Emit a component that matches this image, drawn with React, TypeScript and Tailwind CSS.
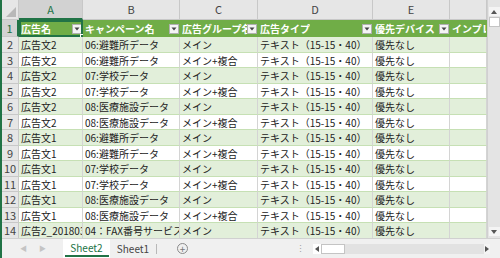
import React from "react";

const cols = ["A", "B", "C", "D", "E", ""];
const headers = ["広告名", "キャンペーン名", "広告グループ名", "広告タイプ", "優先デバイス", "インプレッション"];

const rows = [
  ["広告文2", "06:避難所データ", "メイン"],
  ["広告文2", "06:避難所データ", "メイン+複合"],
  ["広告文2", "07:学校データ", "メイン"],
  ["広告文2", "07:学校データ", "メイン+複合"],
  ["広告文2", "08:医療施設データ", "メイン"],
  ["広告文2", "08:医療施設データ", "メイン+複合"],
  ["広告文1", "06:避難所データ", "メイン"],
  ["広告文1", "06:避難所データ", "メイン+複合"],
  ["広告文1", "07:学校データ", "メイン"],
  ["広告文1", "07:学校データ", "メイン+複合"],
  ["広告文1", "08:医療施設データ", "メイン"],
  ["広告文1", "08:医療施設データ", "メイン+複合"],
  ["広告2_20180322", "04：FAX番号サービス", "メイン"],
];

const FilterButton = () => (
  <span className="ml-auto flex h-[10px] w-[10px] shrink-0 items-center justify-center border border-[#b0b0b0] bg-[#f4f4f4]">
    <svg width="6" height="4" viewBox="0 0 6 4">
      <path d="M0.5 0.5 L5.5 0.5 L3 3.5 Z" fill="#444" />
    </svg>
  </span>
);

const VScroll = () => (
  <div className="flex w-[13px] flex-col items-center border-l border-[#d0d0d0] bg-[#e4e4e4] pt-[7px]">
    <div className="flex h-[9px] w-[11px] items-center justify-center bg-[#f4f4f4]">
      <svg width="6" height="4" viewBox="0 0 6 4">
        <path d="M0 4 L6 4 L3 0 Z" fill="#555" />
      </svg>
    </div>
    <div className="mt-[1px] h-[10px] w-[11px] border border-[#c4c4c4] bg-white" />
    <div className="flex-1" />
    <div className="mb-[2px] flex h-[9px] w-[11px] items-center justify-center bg-[#f4f4f4]">
      <svg width="6" height="4" viewBox="0 0 6 4">
        <path d="M0 0 L6 0 L3 4 Z" fill="#555" />
      </svg>
    </div>
  </div>
);

const Tabs = () => (
  <div className="flex h-[20px] items-center border-t border-[#d0d0d0] bg-[#f0f0f0] text-[10px]">
    <div className="flex w-[61px] items-center gap-[12px] pl-[18px] text-[7px] text-[#c4c4c4]">
      <span>◀</span>
      <span>▶</span>
    </div>
    <div className="flex h-full w-[47px] flex-col items-center justify-center bg-white">
      <span className="mt-[1px] leading-[12px] text-[#217346]">Sheet2</span>
      <span className="mt-[1px] h-[2px] w-[44px] bg-[#217346]" />
    </div>
    <div className="flex h-full w-[46px] items-center justify-center text-[#444]">Sheet1</div>
    <div className="h-[10px] w-px bg-[#b8b8b8]" />
    <div className="ml-[20px] flex h-[11px] w-[11px] items-center justify-center rounded-full border border-[#8a8a8a] text-[10px] leading-none text-[#777]">
      +
    </div>
    <div className="ml-[108px] text-[9px] text-[#a0a0a0]">⋮</div>
    <div className="ml-[8px] flex h-[10px] w-[177px] items-center bg-[#e2e2e2]">
      <div className="flex h-full w-[8px] items-center justify-center bg-white">
        <svg width="4" height="6" viewBox="0 0 4 6">
          <path d="M4 0 L4 6 L0 3 Z" fill="#555" />
        </svg>
      </div>
      <div className="h-full w-[24px] border border-[#c4c4c4] bg-white" />
      <div className="flex-1" />
      <div className="flex h-full w-[6px] items-center justify-center bg-[#f4f4f4]">
        <svg width="4" height="6" viewBox="0 0 4 6">
          <path d="M0 0 L0 6 L4 3 Z" fill="#555" />
        </svg>
      </div>
    </div>
  </div>
);

export default function App() {
  return (
    <div
      className="flex h-[258px] w-[500px] flex-col overflow-hidden border-l-2 border-[#217346] bg-white"
      style={{ fontFamily: "'Noto Sans CJK JP', 'Noto Sans', sans-serif" }}
    >
      <div className="flex h-[238px]">
        <div className="grid flex-1 grid-cols-[17px_64px_97px_78px_115px_77px_37px] grid-rows-[20px_17px_16px_15px_16px_15px_16px_15px_16px_15px_16px_15px_16px_15px_16px] overflow-hidden">
          {/* column header row */}
          <div className="relative border-r border-b border-[#c8c8c8] bg-[#e6e6e6]">
            <svg className="absolute right-[2px] bottom-[2px]" width="10" height="10" viewBox="0 0 10 10">
              <path d="M10 0 L10 10 L0 10 Z" fill="#b8b8b8" />
            </svg>
          </div>
          {cols.map((c, i) => (
            <div
              key={c + i}
              className={
                i === 0
                  ? "flex items-center justify-center border-r border-b-2 border-r-[#c8c8c8] border-b-[#217346] bg-[#d2d2d2] text-[11px] text-[#217346]"
                  : "flex items-center justify-center border-r border-b border-[#c8c8c8] bg-[#e6e6e6] text-[11px] text-[#444]"
              }
            >
              {c}
            </div>
          ))}

          {/* table header row */}
          <div className="flex items-center justify-center border-r-2 border-b border-r-[#217346] border-b-[#c8c8c8] bg-[#d2d2d2] text-[11px] text-[#217346]">
            1
          </div>
          {headers.map((h, i) => (
            <div
              key={h}
              className="relative flex items-center overflow-hidden bg-[#70ad47] pr-[1px] pl-[2px] text-[10px] font-bold whitespace-nowrap text-white"
            >
              <span className="overflow-hidden">{h}</span>
              {i < 5 && <FilterButton />}
              {i === 0 && (
                <>
                  <span className="pointer-events-none absolute inset-0 border-2 border-[#217346]" />
                  <span className="absolute right-[-1px] bottom-[-1px] h-[4px] w-[4px] border border-white bg-[#217346]" />
                </>
              )}
            </div>
          ))}

          {/* data rows */}
          {rows.map((r, i) => {
            const green = i % 2 === 0;
            const cell = green
              ? "flex items-center overflow-hidden whitespace-nowrap border-r border-b border-r-[#d4d4d4] border-b-[#c6e0b4] bg-[#e2efda] px-[2px] text-[10px] text-[#222]"
              : "flex items-center overflow-hidden whitespace-nowrap border-r border-b border-r-[#d4d4d4] border-b-[#c6e0b4] bg-white px-[2px] text-[10px] text-[#222]";
            return (
              <React.Fragment key={i}>
                <div className="flex items-center justify-center border-r border-b border-[#c8c8c8] bg-[#e6e6e6] text-[11px] text-[#444]">
                  {i + 2}
                </div>
                <div className={cell}>{r[0]}</div>
                <div className={cell}>{r[1]}</div>
                <div className={cell}>{r[2]}</div>
                <div className={cell}>テキスト（15-15・40）</div>
                <div className={cell}>優先なし</div>
                <div className={cell} />
              </React.Fragment>
            );
          })}
        </div>
        <VScroll />
      </div>
      <Tabs />
    </div>
  );
}
